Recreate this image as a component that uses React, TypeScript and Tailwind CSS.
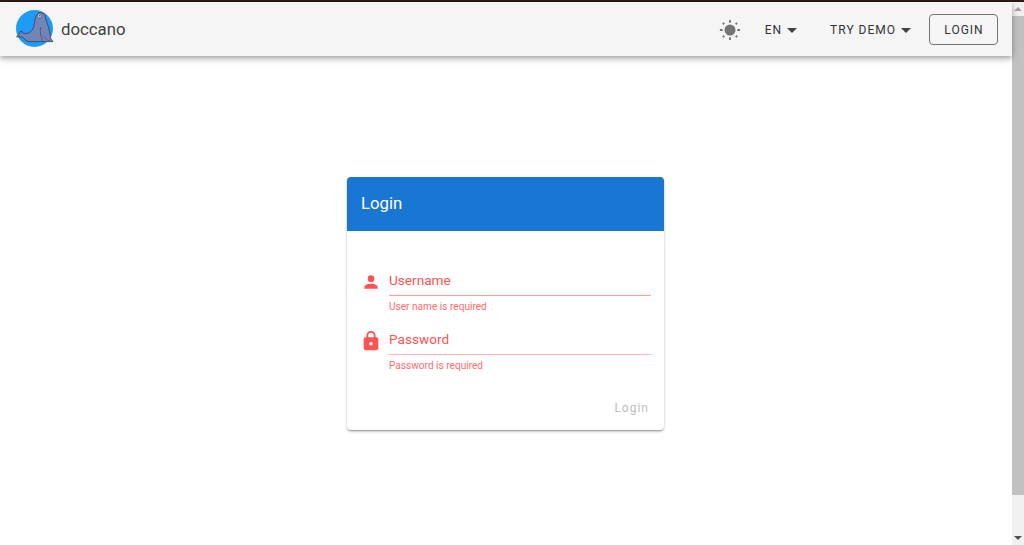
import React from "react";

function Caret() {
  return (
    <svg viewBox="0 0 24 24" className="w-6 h-6 fill-[#424242] -ml-[2px] -mr-1.5">
      <path d="M7 10l5 5 5-5z" />
    </svg>
  );
}

function SealLogo() {
  return (
    <svg viewBox="0 0 40 40" className="w-[40px] h-[40px] shrink-0">
      <circle cx="18.500" cy="19.500" r="18.500" fill="#1e9bf5" />
      {/* seal body */}
      <path
        d="M22.500 3.800C25.500 2.800 28.800 4 29.300 7.500C29.800 11 31 13.500 32 16.500C33.300 21 34.300 25 34.500 29L37 32.600L13 32.600C10.500 32.200 8.500 30.500 6.500 28L0.500 27.800L3 25.500L4.800 22L8.500 24.700C12 25 16 22.500 17.500 18.500C19 14 18.500 7 22.500 3.800Z"
        fill="#7484b4"
        stroke="#2a3454"
        strokeWidth="0.7"
        strokeLinejoin="round"
      />
      <path d="M24.500 18c-.5 5 .2 9 2.200 14.300" fill="none" stroke="#2a3454" strokeWidth="0.5" />
      <path d="M27.500 27c1.500 2 3.500 4 6.500 5.300" fill="none" stroke="#2a3454" strokeWidth="0.4" />
      <circle cx="23.500" cy="6.800" r="1.900" fill="#e8ecf5" stroke="#2a3454" strokeWidth="0.5" />
      <circle cx="23.700" cy="6.800" r="0.800" fill="#2a3454" />
    </svg>
  );
}

function Sun() {
  return (
    <svg viewBox="0 0 24 24" className="w-[22px] h-[22px] fill-[#757575] shrink-0">
      <circle cx="12" cy="12" r="6" />
      <path d="M11 1h2v3h-2zM11 20h2v3h-2zM1 11h3v2H1zM20 11h3v2h-3zM3.500 5l1.500-1.500 1.500 1.500L5 6.500zM17.500 19l1.500-1.500 1.500 1.500-1.500 1.500zM3.500 19L5 17.500 6.500 19 5 20.500zM17.500 5L19 3.500 20.500 5 19 6.500z" />
    </svg>
  );
}

export default function App() {
  return (
    <div className="h-[545px] flex flex-col overflow-hidden bg-white font-['Roboto',sans-serif]">
      <div className="h-[2px] shrink-0 bg-[#2a1a14]" />
      <div className="flex-1 flex min-h-0">
        <div className="flex-1 flex flex-col min-w-0">
          <header className="h-[54px] shrink-0 flex items-center bg-[#f5f5f5] pl-4 pr-[14px] shadow-[0_2px_4px_-1px_rgba(0,0,0,0.2),0_4px_5px_0_rgba(0,0,0,0.14),0_1px_10px_0_rgba(0,0,0,0.12)] relative">
            <SealLogo />
            <span className="ml-[5px] pt-[1px] text-[16.8px] text-[#424242] leading-none">doccano</span>
            <div className="ml-auto flex items-center pt-[1px]">
              <Sun />
              <button className="ml-[24px] flex items-center text-[12px] tracking-[1px] text-[#333333]">
                EN <Caret />
              </button>
              <button className="ml-[32px] flex items-center text-[12px] tracking-[1px] text-[#333333]">
                TRY DEMO <Caret />
              </button>
              <button className="ml-[17px] w-[69px] h-[31px] pl-[1px] rounded border border-[#757575] text-[12px] tracking-[1px] text-[#333333]">
                LOGIN
              </button>
            </div>
          </header>

          <main className="flex-1 flex justify-center items-start pt-[121px]">
            <div className="w-[317px] h-[253px] ml-[-1px] rounded bg-white shadow-[0_2px_3px_-1px_rgba(0,0,0,0.3),0_1px_1px_0_rgba(0,0,0,0.14),0_1px_3px_0_rgba(0,0,0,0.12)] overflow-hidden">
              <div className="h-[54px] bg-[#1976d2] flex items-center px-[14px] text-[16.8px] text-white">Login</div>
              <form className="pt-[34px] pl-[14px] pr-[13px] text-[#ff5252]">
                <div className="flex">
                  <svg viewBox="0 0 24 24" className="w-5 h-5 fill-[#ff5252] mt-[7px] shrink-0">
                    <path d="M12 4a4 4 0 0 1 4 4 4 4 0 0 1-4 4 4 4 0 0 1-4-4 4 4 0 0 1 4-4m0 10c4.420 0 8 1.790 8 4v2H4v-2c0-2.210 3.580-4 8-4z" />
                  </svg>
                  <div className="ml-[8px] flex-1">
                    <div className="h-[31px] border-b border-[#ff9a9a] flex items-center text-[13.6px] leading-none pt-[2px]">Username</div>
                    <p className="mt-[5px] text-[10.1px] leading-[12px] text-[#ff6b6b]">User name is required</p>
                  </div>
                </div>
                <div className="flex mt-[11px]">
                  <svg viewBox="0 0 24 24" className="w-[22px] h-[22px] fill-[#ff5252] mt-[6px] -ml-px shrink-0">
                    <path d="M12 17a2 2 0 0 0 2-2 2 2 0 0 0-2-2 2 2 0 0 0-2 2 2 2 0 0 0 2 2m6-9a2 2 0 0 1 2 2v10a2 2 0 0 1-2 2H6a2 2 0 0 1-2-2V10a2 2 0 0 1 2-2h1V6a5 5 0 0 1 5-5 5 5 0 0 1 5 5v2h1M12 3a3 3 0 0 0-3 3v2h6V6a3 3 0 0 0-3-3z" />
                  </svg>
                  <div className="ml-[7px] flex-1">
                    <div className="h-[31px] border-b border-[#ffb3b3] flex items-center text-[13.6px] leading-none pt-[2px]">Password</div>
                    <p className="mt-[5px] text-[10.1px] leading-[12px] text-[#ff6b6b]">Password is required</p>
                  </div>
                </div>
                <div className="flex justify-end mt-[27px] pr-[2px]">
                  <button type="button" className="text-[12px] tracking-[1px] text-[#bdbdbd]">Login</button>
                </div>
              </form>
            </div>
          </main>
        </div>

        {/* scrollbar */}
        <div className="w-[12px] shrink-0 bg-[#f1f1f1] flex flex-col">
          <div className="h-[14px] shrink-0 flex items-center justify-center">
            <div className="w-0 h-0 border-x-[4px] border-x-transparent border-b-[4px] border-b-[#a3a3a3]" />
          </div>
          <div className="flex-1 flex flex-col justify-start">
            <div className="h-[479px] bg-[#c1c1c1]" />
          </div>
          <div className="h-[14px] shrink-0 flex items-center justify-center">
            <div className="w-0 h-0 border-x-[4px] border-x-transparent border-t-[4px] border-t-[#505050]" />
          </div>
        </div>
      </div>
    </div>
  );
}
